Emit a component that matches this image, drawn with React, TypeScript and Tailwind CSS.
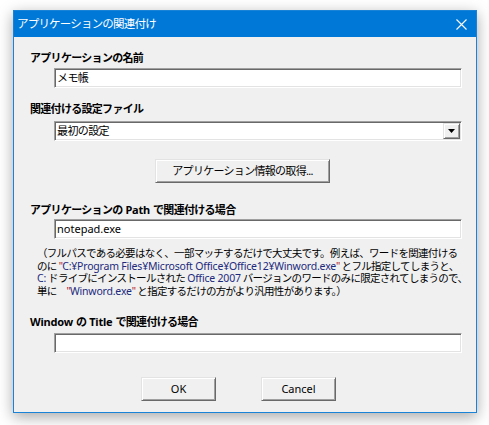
import React from 'react';

const jp = { fontFamily: '"Noto Sans", "Noto Sans CJK JP", sans-serif' };

const sunken =
  'h-[20px] w-[408px] ml-[24px] border border-t-[#a0a0a0] border-l-[#a0a0a0] border-r-white border-b-white bg-white shadow-[inset_1px_1px_0_#696969,inset_-1px_-1px_0_#e3e3e3] flex items-center px-[2px] text-[11px] text-black';

const raised =
  'border border-t-[#e3e3e3] border-l-[#e3e3e3] border-r-[#696969] border-b-[#696969] bg-[#f0f0f0] shadow-[inset_1px_1px_0_#ffffff,inset_-1px_-1px_0_#a0a0a0] flex items-center justify-center text-[11px] text-black';

const Label: React.FC<{ children: React.ReactNode; className?: string }> = ({ children, className }) => (
  <div className={`h-[14px] leading-[14px] text-[11px] font-bold tracking-[-0.7px] text-black whitespace-nowrap ${className ?? ''}`}>
    {children}
  </div>
);

// latin words inside bold labels
const W: React.FC<{ children: React.ReactNode }> = ({ children }) => (
  <span className="mx-[3px] tracking-[-0.2px]">{children}</span>
);

const Path: React.FC<{ children: React.ReactNode }> = ({ children }) => (
  <span className="text-[#1c2a7e] tracking-[-0.2px]">{children}</span>
);

const Q = () => <span className="text-[#b4161b]">"</span>;

export default function App() {
  return (
    <div className="min-h-[425px] w-[489px] bg-white pt-[10px] pl-[13px]" style={jp}>
      <div className="flex h-[403px] w-[464px] flex-col border border-[#1883d7] bg-[#f0f0f0] shadow-[0_4px_14px_rgba(0,0,0,0.35)]">
        {/* title bar */}
        <div className="flex h-[26px] items-center justify-between bg-[#0078d7] pl-[3px] pr-[9px]">
          <span className="text-[11.5px] tracking-[-0.8px] text-white">アプリケーションの関連付け</span>
          <svg width="11" height="11" viewBox="0 0 11 11">
            <path d="M0.5 0.5 L10.5 10.5 M10.5 0.5 L0.5 10.5" stroke="#fff" strokeWidth="1.1" />
          </svg>
        </div>

        <div className="flex flex-col pl-[16px] pt-[14px]">
          <Label>アプリケーションの名前</Label>
          <div className={`${sunken} mt-[3px] tracking-[-0.6px]`}>メモ帳</div>

          <Label className="mt-[14px]">関連付ける設定ファイル</Label>
          <div className={`${sunken} mt-[5px] justify-between pr-[1px] tracking-[-0.6px]`}>
            <span>最初の設定</span>
            <div className={`${raised} h-[16px] w-[17px]`}>
              <svg width="7" height="4" viewBox="0 0 7 4">
                <path d="M0 0 H7 L3.5 4 Z" fill="#000" />
              </svg>
            </div>
          </div>

          <div className={`${raised} ml-[125px] mt-[18px] h-[24px] w-[175px] tracking-[-0.7px]`}>
            アプリケーション情報の取得...
          </div>

          <Label className="mt-[20px]">
            アプリケーションの<W>Path</W>で関連付ける場合
          </Label>
          <div className={`${sunken} mt-[2px]`}>notepad.exe</div>

          <div className="ml-[7px] mt-[8px] text-[10.5px] leading-[12.5px] tracking-[-0.7px] text-black">
            <div className="whitespace-nowrap">（フルパスである必要はなく、一部マッチするだけで大丈夫です。例えば、ワードを関連付ける</div>
            <div className="whitespace-nowrap">
              のに <Q />
              <Path>C:¥Program Files¥Microsoft Office¥Office12¥Winword.exe</Path>
              <Q /> とフル指定してしまうと、
            </div>
            <div className="whitespace-nowrap">
              <Path>C:</Path> ドライブにインストールされた <Path>Office 2007</Path> バージョンのワードのみに限定されてしまうので、
            </div>
            <div className="whitespace-nowrap">
              単に　<Q />
              <Path>Winword.exe</Path>
              <Q /> と指定するだけの方がより汎用性があります。）
            </div>
          </div>

          <Label className="mt-[18px]">
            <span className="mr-[3px] tracking-[-0.2px]">Window</span>の<W>Title</W>で関連付ける場合
          </Label>
          <div className={`${sunken} mt-[4px]`}></div>

          <div className="ml-[111px] mt-[24px] flex gap-[45px]">
            <div className={`${raised} h-[24px] w-[75px]`}>OK</div>
            <div className={`${raised} h-[24px] w-[75px]`}>Cancel</div>
          </div>
        </div>
      </div>
    </div>
  );
}
